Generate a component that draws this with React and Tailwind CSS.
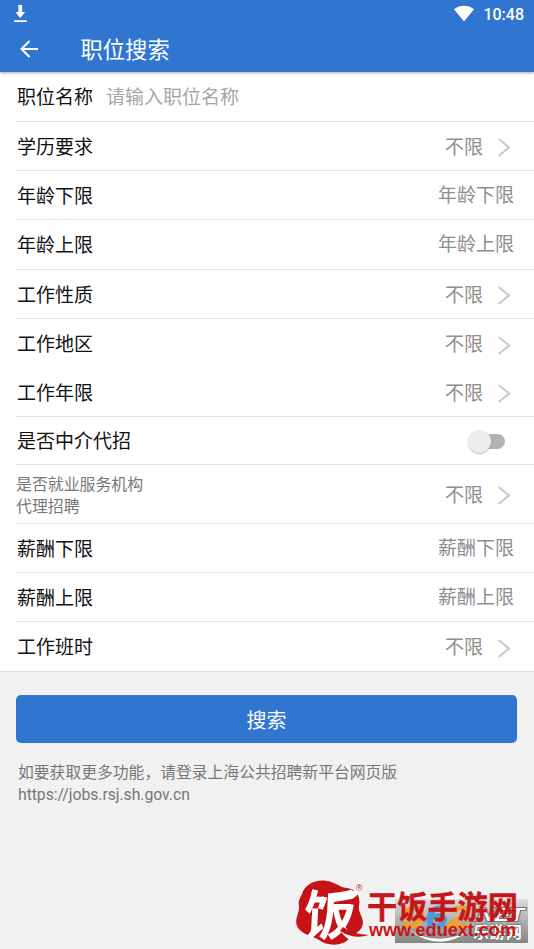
import React, { useState } from 'react';

const ROWS = [
    { label: '学历要求', value: '不限', arrow: true, size: 'h-[49px]' },
    { label: '年龄下限', placeholder: '年龄下限', size: 'h-[49px]' },
    { label: '年龄上限', placeholder: '年龄上限', size: 'h-[50px]' },
    { label: '工作性质', value: '不限', arrow: true, size: 'h-[49px]' },
    { label: '工作地区', value: '不限', arrow: true, size: 'h-[49px]', noLine: true },
    { label: '工作年限', value: '不限', arrow: true, size: 'h-[49px]' },
    { label: '是否中介代招', toggle: true, size: 'h-12' },
    { label: '是否就业服务机构代理招聘', small: true, value: '不限', arrow: true, size: 'h-[59px]' },
    { label: '薪酬下限', placeholder: '薪酬下限', size: 'h-[49px]' },
    { label: '薪酬上限', placeholder: '薪酬上限', size: 'h-[49px]' },
    { label: '工作班时', value: '不限', arrow: true, size: 'h-[49px]', noLine: true },
];

function Chevron() {
    return (
        <svg className="ml-[15px] h-[19px] w-[12px]" viewBox="0 0 12 19" fill="none" stroke="#c9c9cb" strokeWidth="2.1">
            <path d="M0.7 1 L11 9.5 L0.7 18" />
        </svg>
    );
}

function Toggle() {
    const [on, setOn] = useState(false);
    return (
        <button onClick={() => setOn(!on)} className="relative mr-[9px] mb-[2px] h-6 w-[37px]">
            <span className="absolute top-[5px] right-0 h-[15px] w-[30px] rounded-full bg-[#b2b2b2]" />
            <span
                className={`absolute top-[1px] h-[23px] w-[23px] rounded-full bg-[#ececec] shadow-[0_1px_1px_rgba(0,0,0,0.25)] ${on ? 'right-0' : 'left-0'}`}
            />
        </button>
    );
}

function Row({ row }) {
    return (
        <div className={`ml-4 flex items-center justify-between pt-[3px] pr-5 ${row.size} ${row.noLine ? '' : 'border-b border-[#e4e4e4]'}`}>
            {row.small ? (
                <span className="w-[130px] text-[15.9px] leading-[22px] text-[#777]">{row.label}</span>
            ) : (
                <span className="pl-px text-[19px] leading-7 text-[#111]">{row.label}</span>
            )}
            {row.placeholder && <span className="pb-[2px] text-[19px] leading-7 text-[#8e8e8e]">{row.placeholder}</span>}
            {row.toggle && <Toggle />}
            {row.arrow && (
                <div className="flex items-center pr-[4px]">
                    <span className="text-[19px] leading-7 text-[#8e8e8e]">{row.value}</span>
                    <Chevron />
                </div>
            )}
        </div>
    );
}

function StatusBar() {
    return (
        <div className="flex h-7 items-center justify-between pl-[14px] pr-[10px]">
            <svg className="h-[18px] w-[13px]" viewBox="0 0 13 18" fill="#fff">
                <path d="M4.4 0h3.8v7h3L6.3 12.9 1.4 7h3zM0 15.2h12.6v1.8H0z" />
            </svg>
            <div className="flex items-center pt-px">
                <svg className="mr-[9px] mb-[3px] h-[17px] w-5" viewBox="0 0 20 17" fill="#fff">
                    <path d="M0 4.2C6 -0.4 14 -0.4 20 4.2L10 16.5z" />
                </svg>
                <span className="text-[16px] leading-5 font-medium">10:48</span>
            </div>
        </div>
    );
}

function Watermarks() {
    return (
        <div className="pointer-events-none absolute right-0 bottom-0 h-[75px] w-[244px] leading-none">
            <div className="absolute top-[25px] left-[105px] h-[44px] w-[133px] bg-gradient-to-b from-[#dddddd] to-[#858585]">
                <svg className="absolute inset-0 overflow-visible" width="133" height="44" viewBox="0 0 133 44">
                    <path d="M14 31Q42 48 74 32Q44 54 14 31Z" fill="#fff" />
                    <g fontFamily="Liberation Sans" fontWeight="700" fontStyle="italic">
                        <g fontSize="32" strokeWidth="1.2">
                            <text x="7" y="29" fill="#efa12c" stroke="#efa12c" textLength="22" lengthAdjust="spacingAndGlyphs">9</text>
                            <text x="30" y="29" fill="#4c9cda" stroke="#4c9cda" textLength="22" lengthAdjust="spacingAndGlyphs">6</text>
                            <text x="53" y="29" fill="#efa12c" stroke="#efa12c" textLength="22" lengthAdjust="spacingAndGlyphs">2</text>
                        </g>
                        <text x="76" y="22" fontSize="18" stroke="#777" strokeWidth="2" paintOrder="stroke" fill="#fff" textLength="53" lengthAdjust="spacingAndGlyphs">.NET</text>
                    </g>
                    <text x="78" y="39" fontFamily="Noto Sans CJK SC" fontWeight="700" fontSize="16" fill="#fff" stroke="#777" strokeWidth="1.5" paintOrder="stroke" textLength="49">乐游网</text>
                </svg>
            </div>
            <svg className="absolute inset-0 overflow-visible" width="244" height="75" viewBox="0 0 244 75">
                <path
                    d="M12 20C15 10 26 5 37 7C46 8 48 13 57 14C66 15 71 22 69 32C68 38 73 43 73 49C72 58 64 59 60 64C52 73 37 72 29 66C23 62 13 61 8 54C3 46 10 39 9 32C8 27 10 24 12 20Z"
                    fill="#c51318"
                />
                <text transform="translate(13 61) skewX(-3)" fontFamily="Noto Sans CJK SC" fontWeight="700" fontSize="54" fill="#fff" textLength="53" lengthAdjust="spacingAndGlyphs">饭</text>
                <path d="M44 22Q59 21 69 13Q69 22 62 25L44 28Z" fill="#fff" />
                <path d="M53 53Q63 60 79 61Q64 66 50 57Z" fill="#c51318" />
                <text x="66" y="17" fontFamily="Liberation Sans" fontSize="9" fill="#c51318">®</text>
                <text x="77" y="44" fontFamily="Noto Sans CJK SC" fontWeight="700" fontSize="31" fill="#c5171b" stroke="#c5171b" strokeWidth="0.4" textLength="151" lengthAdjust="spacingAndGlyphs">干饭手游网</text>
                <text x="79" y="62" fontFamily="Liberation Sans" fontWeight="700" fontSize="18" fill="#c5171b" textLength="147" lengthAdjust="spacingAndGlyphs">www.eduext.com</text>
            </svg>
        </div>
    );
}

export default function App() {
    return (
        <div className="relative h-[949px] w-[534px] overflow-hidden bg-[#f1f1f1] font-[Roboto,'Noto_Sans_CJK_SC',sans-serif]">
            <header className="relative h-[72px] bg-[#3076d1] text-white shadow-[0_1px_3px_rgba(0,0,0,0.35)]">
                <StatusBar />
                <div className="flex h-[42px] items-center pl-5">
                    <svg className="h-[18px] w-[18px]" viewBox="0 0 18 18" fill="none" stroke="#fff" strokeWidth="2">
                        <path d="M18 9H2M9.5 1L1.5 9L9.5 17" />
                    </svg>
                    <h1 className="ml-[42.5px] pt-[2px] text-[22.3px] leading-8">职位搜索</h1>
                </div>
            </header>

            <main className="border-b border-[#dedede] bg-white">
                <div className="ml-4 flex h-[50px] items-center border-b border-[#e0e0e0] pt-[3px] pl-px text-[19px] leading-7">
                    <span className="text-[#111]">职位名称</span>
                    <span className="ml-[13px] text-[#a5a5a5]">请输入职位名称</span>
                </div>
                {ROWS.map((row) => (
                    <Row key={row.label} row={row} />
                ))}
            </main>

            <div className="px-4 pt-[23px]">
                <button className="h-12 w-[501px] rounded-[5px] bg-[#3076d1] pt-[3px] text-[20px] leading-7 text-white">搜索</button>
                <p className="mt-[19px] pl-[2px] text-[15.8px] leading-[22px] text-[#777]">
                    如要获取更多功能，请登录上海公共招聘新平台网页版
                    <br />
                    <span className="tracking-[-0.06px]">https://jobs.rsj.sh.gov.cn</span>
                </p>
            </div>

            <Watermarks />
        </div>
    );
}
